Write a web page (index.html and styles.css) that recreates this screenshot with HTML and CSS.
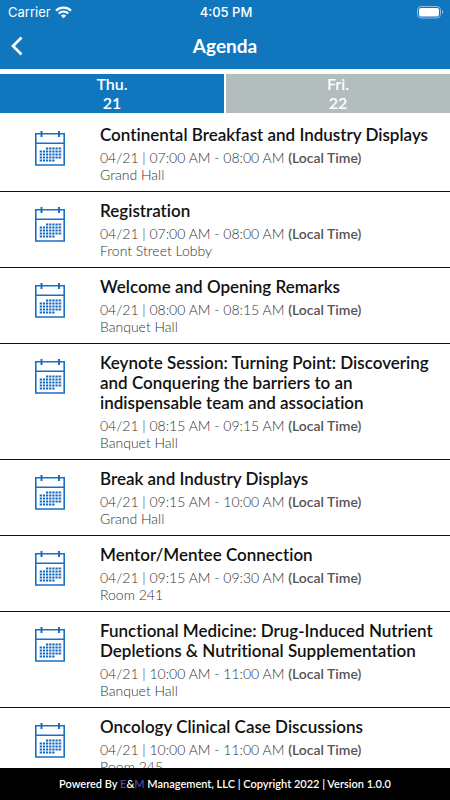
FILE: index.html
```html
<!DOCTYPE html>
<html lang="en">
<head>
<meta charset="utf-8">
<meta name="viewport" content="width=device-width, initial-scale=1">
<title>Agenda</title>
<link rel="stylesheet" href="styles.css">
</head>
<body>
<svg class="defs" aria-hidden="true">
  <symbol id="calendar" viewBox="0 0 30 35">
    <path d="M.8 2.800H29.200V34H.8Z M.8 12.300H29.200" fill="none" stroke="#1a6fc4" stroke-width="1.600"/>
    <path d="M6.500 0V6 M24 0V6" stroke="#1a6fc4" stroke-width="2"/>
    <path d="M11 17.500H27" stroke="#0f66c0" stroke-width="2.200" stroke-dasharray="2.200 .95"/>
    <path d="M4.700 20.500H27 M4.700 23.500H27 M4.700 26.500H27" stroke="#0f66c0" stroke-width="2.200" stroke-dasharray="2.200 .95"/>
    <path d="M4.700 29.500H19.500" stroke="#0f66c0" stroke-width="2.200" stroke-dasharray="2.200 .95"/>
  </symbol>
</svg>
<div class="app">
  <header class="header">
    <div class="status">
      <div class="carrier">
        <span>Carrier</span>
        <svg width="17" height="13" viewBox="0 0 17 13" aria-hidden="true">
          <path d="M1 4.700C5.200 .7 11.800 .7 16 4.700M3.700 7.500C6.500 4.900 10.500 4.900 13.300 7.500" fill="none" stroke="#fff" stroke-width="2.200"/>
          <path d="M5.800 9.600C7.400 8.200 9.600 8.200 11.200 9.600L8.500 12.300Z" fill="#fff"/>
        </svg>
      </div>
      <span class="clock">4:05 PM</span>
      <svg class="battery" width="27" height="13" viewBox="0 0 27 13" aria-hidden="true">
        <rect x=".5" y=".5" width="23" height="11.500" rx="3.500" fill="none" stroke="#8dbde3"/>
        <rect x="2" y="2" width="20" height="8.500" rx="2" fill="#fff"/>
        <path d="M25 4.300C26.800 5 26.800 7.500 25 8.200Z" fill="#8dbde3"/>
      </svg>
    </div>
    <div class="navbar">
      <button class="back" type="button" aria-label="Back">
        <svg width="12" height="20" viewBox="0 0 12 20" aria-hidden="true"><path d="M10.500 1.500L2 10L10.500 18.500" fill="none" stroke="#fff" stroke-width="2.700"/></svg>
      </button>
      <h1>Agenda</h1>
    </div>
  </header>
  <nav class="days">
    <button class="day active" type="button"><span>Thu.</span><span>21</span></button>
    <button class="day" type="button"><span>Fri.</span><span>22</span></button>
  </nav>
  <main class="list">
    <article class="row"><svg class="icon"><use href="#calendar"/></svg><div><h2>Continental Breakfast and Industry Displays</h2><p>04/21 | 07:00 AM - 08:00 AM <b>(Local Time)</b></p><p>Grand Hall</p></div></article>
    <article class="row"><svg class="icon"><use href="#calendar"/></svg><div><h2>Registration</h2><p>04/21 | 07:00 AM - 08:00 AM <b>(Local Time)</b></p><p>Front Street Lobby</p></div></article>
    <article class="row"><svg class="icon"><use href="#calendar"/></svg><div><h2>Welcome and Opening Remarks</h2><p>04/21 | 08:00 AM - 08:15 AM <b>(Local Time)</b></p><p>Banquet Hall</p></div></article>
    <article class="row"><svg class="icon"><use href="#calendar"/></svg><div><h2>Keynote Session: Turning Point: Discovering and Conquering the barriers to an indispensable team and association</h2><p>04/21 | 08:15 AM - 09:15 AM <b>(Local Time)</b></p><p>Banquet Hall</p></div></article>
    <article class="row"><svg class="icon"><use href="#calendar"/></svg><div><h2>Break and Industry Displays</h2><p>04/21 | 09:15 AM - 10:00 AM <b>(Local Time)</b></p><p>Grand Hall</p></div></article>
    <article class="row"><svg class="icon"><use href="#calendar"/></svg><div><h2>Mentor/Mentee Connection</h2><p>04/21 | 09:15 AM - 09:30 AM <b>(Local Time)</b></p><p>Room 241</p></div></article>
    <article class="row"><svg class="icon"><use href="#calendar"/></svg><div><h2>Functional Medicine: Drug-Induced Nutrient Depletions &amp; Nutritional Supplementation</h2><p>04/21 | 10:00 AM - 11:00 AM <b>(Local Time)</b></p><p>Banquet Hall</p></div></article>
    <article class="row"><svg class="icon"><use href="#calendar"/></svg><div><h2>Oncology Clinical Case Discussions</h2><p>04/21 | 10:00 AM - 11:00 AM <b>(Local Time)</b></p><p>Room 245</p></div></article>
  </main>
  <footer class="footer">Powered By <span class="brand">E</span>&amp;<span class="brand">M</span> Management, LLC | Copyright 2022 | Version 1.0.0</footer>
</div>
</body>
</html>
```
FILE: styles.css
```css
* {
  box-sizing: border-box;
}

body {
  margin: 0;
  background: #fff;
  color: #111;
  font-family: Lato, sans-serif;
  font-variant-ligatures: none;
}

h1, h2, p {
  margin: 0;
}

button {
  border: 0;
  padding: 0;
  background: none;
  color: inherit;
  font: inherit;
}

.defs {
  display: none;
}

.app {
  display: flex;
  flex-direction: column;
  height: 100vh;
}

.header {
  background: #1077be;
  color: #fff;
  padding-bottom: 3px;
}

.status {
  display: grid;
  grid-template-columns: 1fr auto 1fr;
  align-items: center;
  height: 24px;
  padding: 0 6px 0 8px;
  font: 500 13px/20px Inter, sans-serif;
}

.carrier {
  display: flex;
  align-items: center;
  gap: 4px;
  font-weight: 400;
}

.battery {
  justify-self: end;
}

.navbar {
  display: grid;
  grid-template-columns: 40px 1fr 40px;
  align-items: center;
  height: 40px;
  margin-top: 2px;
}

.back {
  display: flex;
  padding-left: 11px;
}

h1 {
  text-align: center;
  font-size: 19px;
  line-height: 24px;
  font-weight: 700;
}

.days {
  display: grid;
  grid-template-columns: 1fr 1fr;
  gap: 2px;
  padding: 5px 0 2px;
}

.day {
  display: flex;
  flex-direction: column;
  align-items: center;
  height: 39px;
  background: #b4bdbd;
  color: #fff;
  font-size: 16px;
  line-height: 19px;
  font-weight: 600;
}

.active {
  background: #1077be;
}

.list {
  flex: 1;
  min-height: 0;
  padding-top: 1px;
  overflow: hidden;
}

.row {
  display: grid;
  grid-template-columns: 30px 1fr;
  column-gap: 35px;
  padding: 9px 16px 8px 35px;
  border-bottom: 1px solid #111;
}

.icon {
  width: 30px;
  height: 35px;
  margin-top: 6px;
}

h2 {
  margin-bottom: 4px;
  font-size: 17px;
  line-height: 20px;
  font-weight: 600;
}

p {
  color: #333;
  font-size: 14px;
  line-height: 17px;
  font-weight: 300;
}

b {
  color: #555;
  font-weight: 600;
}

.footer {
  padding: 8px;
  background: #000;
  color: #fff;
  text-align: center;
  font-size: 11px;
  line-height: 16px;
  font-weight: 600;
}

.brand {
  color: #5046a5;
}
```
